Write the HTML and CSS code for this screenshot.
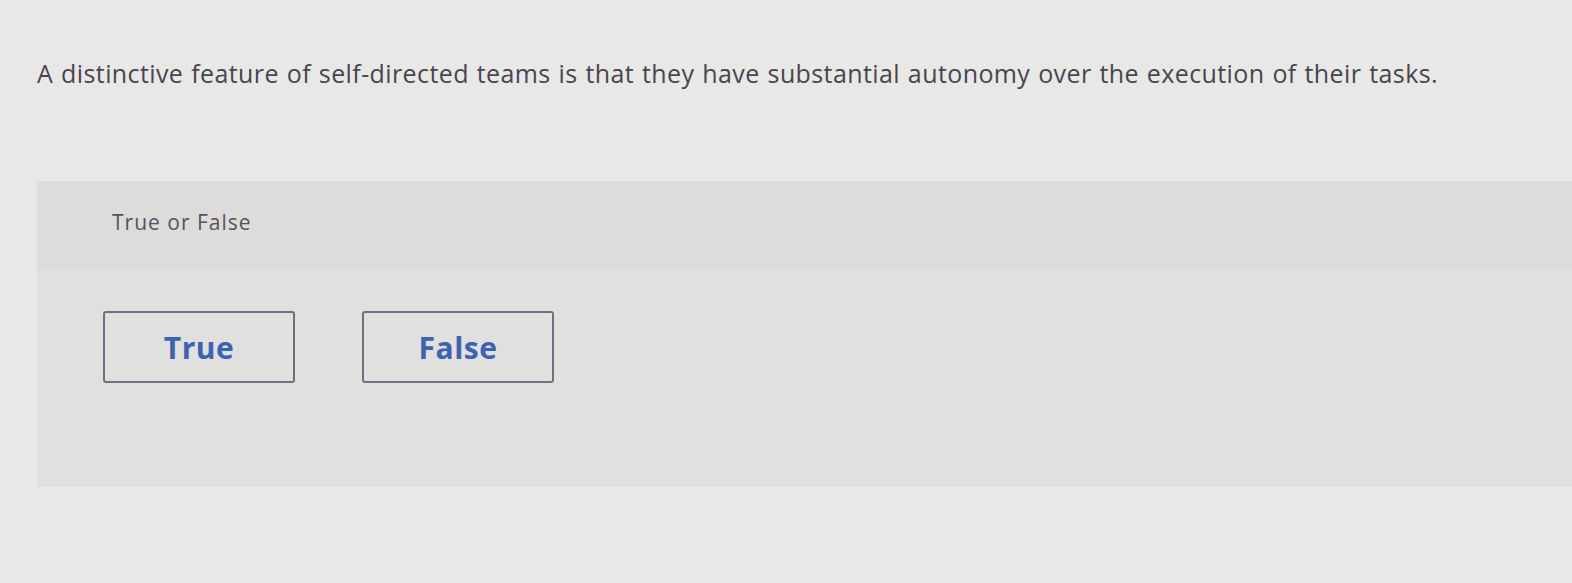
FILE: index.html
```html
<!DOCTYPE html>
<html lang="en">
  <head>
    <meta charset="UTF-8" />
    <meta name="viewport" content="width=device-width, initial-scale=1.0" />
    <title>True or False</title>
    <link rel="stylesheet" href="styles.css">
  </head>
  <body>
    <!-- Question -->
    <p class="question">A distinctive feature of self-directed teams is that they have substantial autonomy over the execution of their tasks.</p>

    <!-- Answer panel -->
    <div class="panel">
      <div class="panel-head">True or False</div>
      <div class="panel-body">
        <button class="choice">True</button>
        <button class="choice">False</button>
      </div>
    </div>
  </body>
</html>
```

FILE: styles.css
```css
body {
  margin: 0;
  background: #e8e8e7;
  font-family: "Open Sans", sans-serif;
}
.question {
  margin: 0;
  padding: 57px 0 0 37px;
  font-size: 25px;
  line-height: 32px;
  letter-spacing: 0.4px;
  word-spacing: 1px;
  color: #4a4451;
}
.panel {
  margin: 92px 0 0 37px;
}
.panel-head {
  height: 89px;
  box-sizing: border-box;
  padding: 27px 0 0 75px;
  background: #dcdcdb;
  font-size: 21px;
  letter-spacing: 1px;
  color: #57525a;
}
.panel-body {
  height: 217px;
  box-sizing: border-box;
  padding: 41px 0 0 66px;
  background: #e0e0df;
  display: flex;
  gap: 67px;
}
.choice {
  width: 192px;
  height: 72px;
  background: transparent;
  border: 2px solid #6e7186;
  border-radius: 3px;
  font-family: inherit;
  font-size: 30px;
  font-weight: 700;
  letter-spacing: 0.5px;
  color: #3c62b3;
}
```
